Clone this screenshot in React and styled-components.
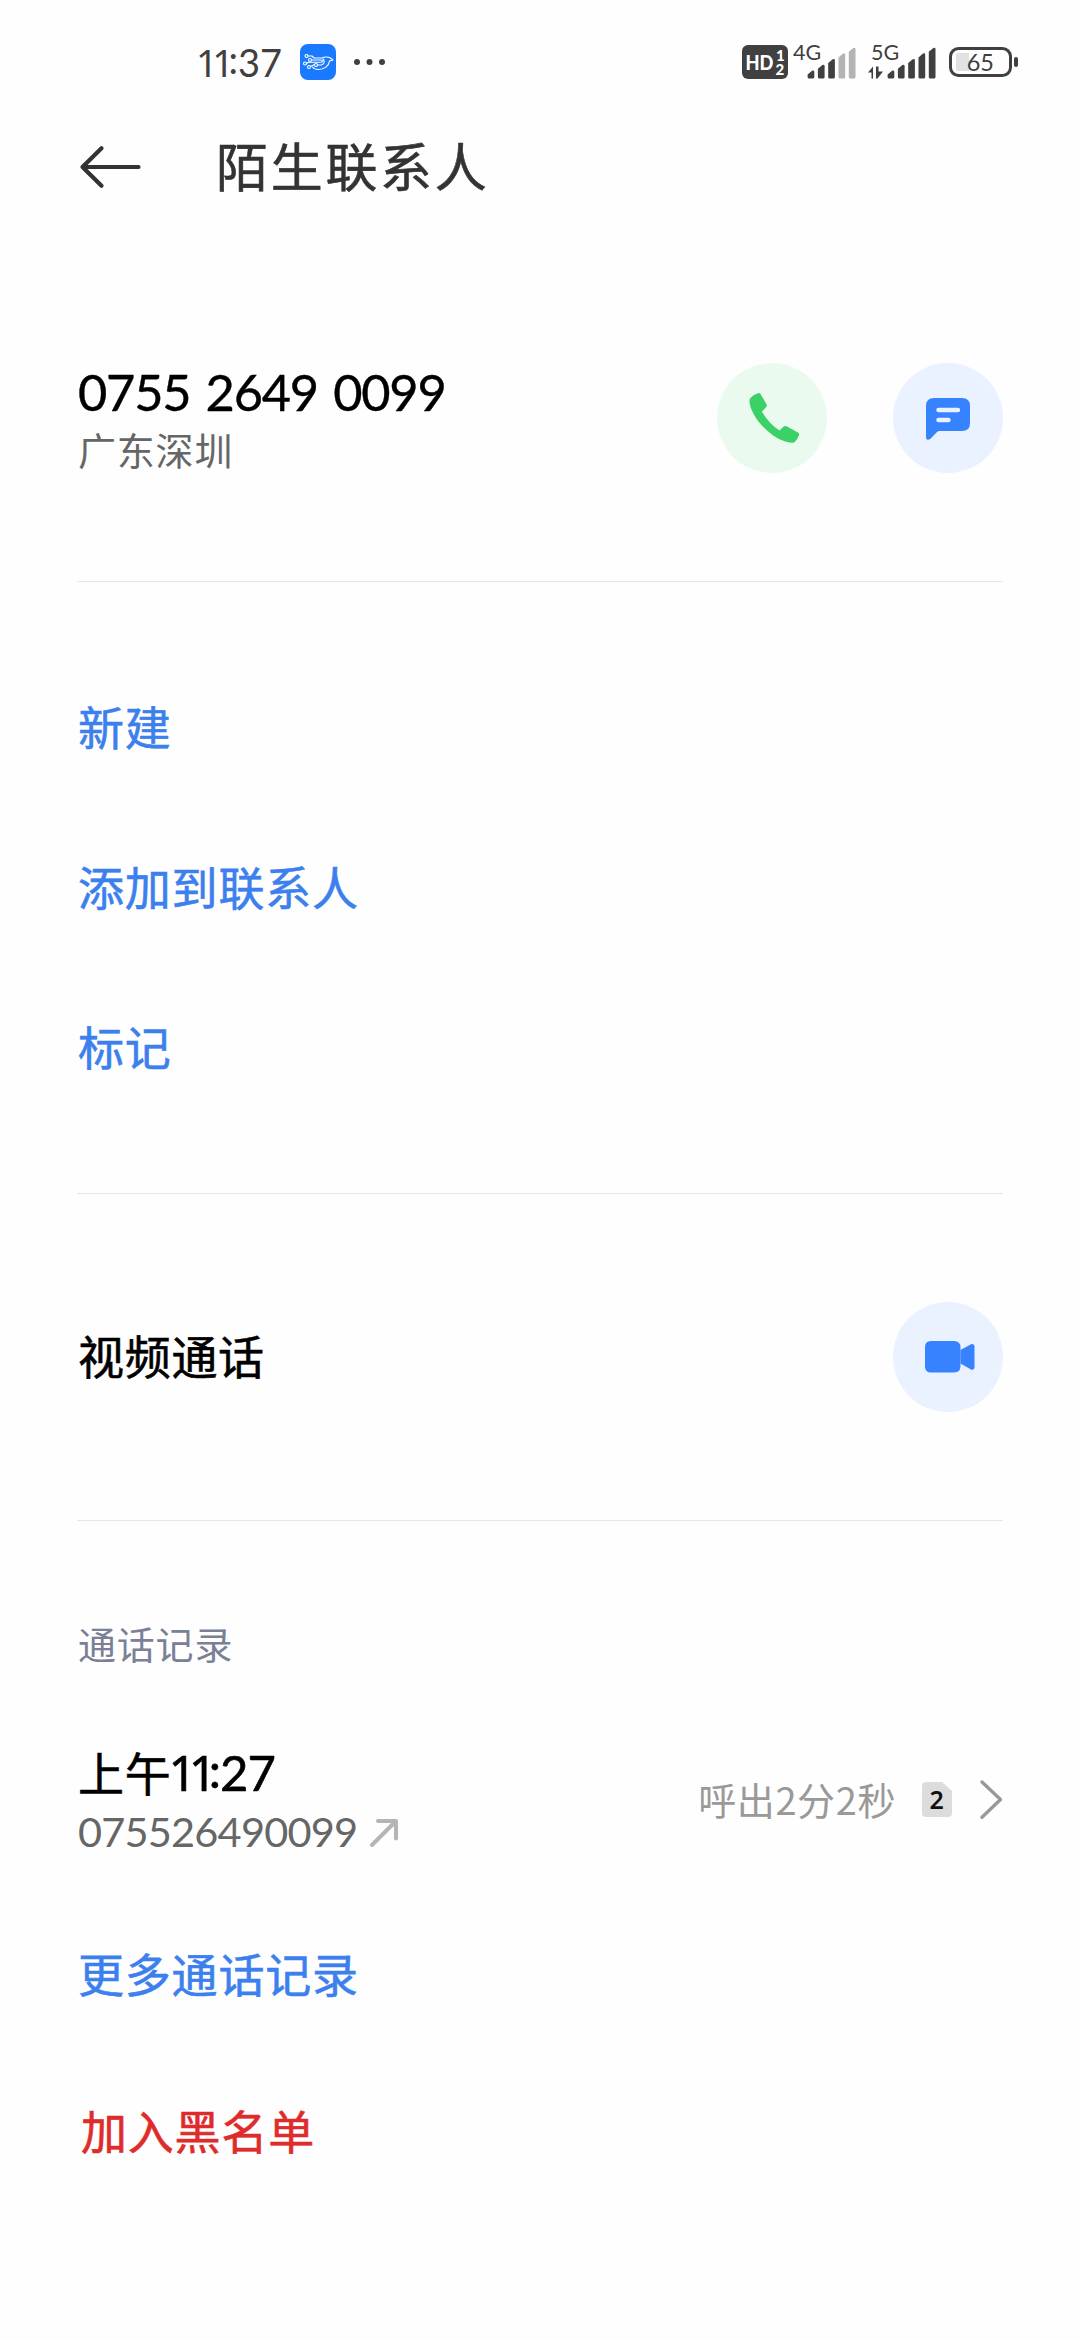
import React from "react";
import styled, { createGlobalStyle } from "styled-components";

const cjk = `"Noto Sans CJK SC", sans-serif`;
const digits = `Lato, "Noto Sans CJK SC", sans-serif`;
const blue = "#3c80ee";
const ink = "#404040";

const GlobalStyle = createGlobalStyle`
  * {
    box-sizing: border-box;
  }
  body {
    margin: 0;
    background: #fefefe;
    font-family: ${cjk};
  }
  button {
    border: 0;
    padding: 0;
    background: none;
    font: inherit;
    text-align: left;
  }
`;
const Page = styled.div`
  width: 1080px;
  height: 2340px;
  overflow: hidden;
  background: #fefefe;
`;
const StatusBar = styled.header`
  display: flex;
  justify-content: space-between;
  align-items: center;
  height: 124px;
  padding: 0 62px 0 196px;
`;
const StatusGroup = styled.div`
  display: flex;
  align-items: center;
  height: 100%;
`;
const Clock = styled.span`
  width: 104px;
  font-family: ${digits};
  font-size: 38px;
  line-height: 60px;
  color: ${ink};
  white-space: nowrap;
`;
/* footless narrow ones used in clock times */
const Ones = styled.span`
  font-family: "Noto Sans", sans-serif;
  line-height: 1;
  letter-spacing: ${props => props.by};
`;
const Colon = styled.span`
  line-height: 1;
  vertical-align: 0.07em;
`;
const Icon = styled.svg`
  display: block;
  flex: none;
  overflow: visible;
  margin-left: ${props => props.gap || 0}px;
  margin-top: ${props => props.drop || 0}px;
`;
const TitleBar = styled.div`
  display: flex;
  align-items: center;
  height: 86px;
  padding-left: 80px;
`;
const Title = styled.h1`
  margin: 0 0 4px 75px;
  font-size: 52px;
  font-weight: 400;
  line-height: 80px;
  letter-spacing: 2.7px;
  color: #333;
  -webkit-text-stroke: 0.6px #333;
`;
const Section = styled.section`
  display: flex;
  flex-direction: ${props => (props.column ? "column" : "row")};
  justify-content: ${props => (props.column ? "center" : "space-between")};
  align-items: ${props => (props.column ? "stretch" : "center")};
  height: ${props => props.size}px;
  margin: 0 77px;
  padding-top: ${props => props.top || 0}px;
  border-bottom: 1px solid #e6e6e6;
`;
const Stack = styled.div`
  display: flex;
  flex-direction: column;
`;
const PhoneNumber = styled.div`
  margin-top: 1px;
  padding-left: 1px;
  font-family: ${digits};
  font-size: 50.5px;
  line-height: 60px;
  letter-spacing: -1.2px;
  word-spacing: 3.5px;
  color: #000;
  -webkit-text-stroke: 0.4px #000;
`;
const Region = styled.div`
  padding-left: 1px;
  font-size: 38px;
  line-height: 54px;
  letter-spacing: 0.8px;
  color: #666;
`;
const Actions = styled.div`
  display: flex;
  gap: 66px;
`;
const RoundButton = styled.button`
  display: flex;
  justify-content: center;
  align-items: center;
  width: 110px;
  height: 110px;
  border-radius: 50%;
  background: ${props => (props.call ? "#eafaef" : "#eaf2ff")};
`;
const LinkRow = styled.button`
  display: block;
  height: ${props => props.size || 160}px;
  padding: 0 0 6px ${props => props.indent || 1}px;
  font-size: 46px;
  letter-spacing: 0.8px;
  color: ${props => props.color || blue};
  -webkit-text-stroke: 0.6px ${props => props.color || blue};
`;
const RowLabel = styled.div`
  padding: 0 0 6px 1px;
  font-size: 46px;
  line-height: 60px;
  letter-spacing: 0.7px;
  color: #000;
  -webkit-text-stroke: 0.6px #000;
`;
const Log = styled.section`
  display: flex;
  flex-direction: column;
  align-items: stretch;
  padding: 93px 77px 0 77px;
`;
const LogHeading = styled.h2`
  margin: 0;
  padding-left: 1px;
  font-size: 38px;
  font-weight: 400;
  line-height: 58px;
  letter-spacing: 0.8px;
  color: #7a8095;
`;
const LogRow = styled.div`
  display: flex;
  justify-content: space-between;
  align-items: center;
  height: 154px;
  margin-top: 50px;
`;
const LogTime = styled.div`
  padding: 3px 0 0 1px;
  font-size: 46px;
  line-height: 60px;
  letter-spacing: 0.8px;
  color: #000;
  -webkit-text-stroke: 0.6px #000;
`;
const TimeDigits = styled.span`
  margin-left: -3px;
  font-family: ${digits};
  font-size: 49px;
  letter-spacing: -0.9px;
`;
const LogNumber = styled.div`
  display: flex;
  align-items: center;
  padding-left: 1px;
  font-family: ${digits};
  font-size: 41.5px;
  line-height: 58px;
  letter-spacing: -0.8px;
  color: #666;
`;
const LogMeta = styled.div`
  display: flex;
  align-items: center;
  font-size: 38px;
  line-height: 58px;
  letter-spacing: 0.6px;
  color: #999;
`;

const Bars = ({ gap, faded, data }) => (
  <Icon gap={gap} width={data ? 67 : 61} height="36" viewBox={`${data ? -6 : 0} 0 ${data ? 67 : 61} 36`}>
    <text x={data ? -3 : -1} y="16.3" fontFamily="Lato" fontSize="21.5" fill={ink}>
      {data ? "5G" : "4G"}
    </text>
    {data && (
      <g fill={ink}>
        <path d="M-6 28.5 -1 22.5V34.5H-2.5V28.5Z" />
        <path d="M2 22.5H4.5V27.5H9L3.5 34.5H2Z" />
      </g>
    )}
    {[0, 1, 2, 3, 4].map(i => (
      <path
        key={i}
        d={`M${13.6 + i * 10.3} ${30.5 - i * 5.7}l4.5 -3.8q2.2 -.8 2.2 1.2V33q0 1.5 -1.5 1.5h-3.7q-1.5 0 -1.5 -1.5Z`}
        fill={i >= 5 - faded ? "#b4b4b4" : ink}
      />
    ))}
  </Icon>
);

const App = () => (
  <Page>
    <GlobalStyle />
    <StatusBar>
      <StatusGroup>
        <Clock>
          <Ones by="-5.5px">11</Ones>
          <Colon>:</Colon>37
        </Clock>
        <Icon width="36" height="36" viewBox="0 0 36 36">
          <rect width="36" height="36" rx="8" fill="#1979ff" />
          <g fill="none" stroke="#fff" strokeWidth="1.1" strokeLinecap="round" strokeLinejoin="round">
            <path d="M8 12h4l2 2h8c2-1 6-1.5 8-.2l3 2.2-3.5 1c-.5 5-5.5 8.5-11 8.5-3 0-5-1-6-2.5" />
            <path d="M11.5 16h9.5c2 0 2 2 0 2.2H8.5L6.5 19.5M17.5 21h4c3-1 3.5-4 1.5-6M10.5 22.5l4-2" />
            <circle cx="6.5" cy="12" r="1.5" />
            <circle cx="10" cy="16" r="1.5" />
            <circle cx="5" cy="19.5" r="1.5" />
            <circle cx="9" cy="23" r="1.5" />
            <circle cx="16" cy="21" r="1.5" />
          </g>
        </Icon>
        <Icon gap="18" width="32" height="8" viewBox="0 0 32 8" fill={ink}>
          <circle cx="3" cy="4" r="3" />
          <circle cx="15.5" cy="4" r="3" />
          <circle cx="28" cy="4" r="3" />
        </Icon>
      </StatusGroup>
      <StatusGroup>
        <Icon width="46" height="34" viewBox="0 0 46 34">
          <rect width="46" height="34" rx="6" fill={ink} />
          <g fill="#fff" fontFamily="Lato" fontWeight="900">
            <text x="3.5" y="24.5" fontSize="20" textLength="28" lengthAdjust="spacingAndGlyphs">HD</text>
            <text x="34" y="15.5" fontSize="15">1</text>
            <text x="33.5" y="30" fontSize="15">2</text>
          </g>
        </Icon>
        <Bars gap={6} faded={2} />
        <Bars gap={13} faded={0} data />
        <Icon gap="14" width="69" height="30" viewBox="0 0 69 30">
          <rect x="1.5" y="1.5" width="60" height="27" rx="8" fill="none" stroke={ink} strokeWidth="3" />
          <path d="M9 6h11v18H9q-2 0-2-2V8q0-2 2-2Z" fill="#e2e2e2" />
          <rect x="65" y="10" width="4" height="10" rx="2" fill={ink} />
          <text x="31.3" y="23.5" textAnchor="middle" fontFamily="Lato" fontSize="23.5" fill={ink}>65</text>
        </Icon>
      </StatusGroup>
    </StatusBar>
    <TitleBar>
      <Icon width="61" height="42" viewBox="0 0 61 42" fill="none" stroke="#333" strokeWidth="4.2" strokeLinecap="round" strokeLinejoin="round">
        <path d="M21.5 2.2 2.5 21l19 18.8M2.5 21h56" />
      </Icon>
      <Title>陌生联系人</Title>
    </TitleBar>
    <Section size={372} top={45}>
      <Stack>
        <PhoneNumber>0755 2649 0099</PhoneNumber>
        <Region>广东深圳</Region>
      </Stack>
      <Actions>
        <RoundButton call>
          <Icon gap="4" width="50" height="50" viewBox="0 0 50 50">
            <path
              d="M1 5.5Q4 1.5 9 .2q1.8-.4 2.7 1.1l5.5 9.5q1.2 2-.2 3.5l-4 4.5Q20 31 30.5 37.5l4-3.7q1.5-1.5 3.5-.4l11 6q1.5 1 1 2.8-2 5-5 7.3C36 51 22 43 12.5 32 2 20 -.8 9 1 5.5Z"
              fill="#3ad167"
            />
          </Icon>
        </RoundButton>
        <RoundButton>
          <Icon drop="2" width="44" height="42" viewBox="0 0 44 42">
            <path d="M8 0H36q8 0 8 8V25q0 8-8 8H13.5q-1.5 0-2.5 1L4.5 40.8Q0 43.5 0 38.5V8Q0 0 8 0Z" fill="#3682ff" />
            <path d="M12.5 12h19.5M12.5 22h10" stroke="#eaf2ff" strokeWidth="4.4" strokeLinecap="round" />
          </Icon>
        </RoundButton>
      </Actions>
    </Section>
    <Section column size={612}>
      <LinkRow>新建</LinkRow>
      <LinkRow>添加到联系人</LinkRow>
      <LinkRow>标记</LinkRow>
    </Section>
    <Section size={327}>
      <RowLabel>视频通话</RowLabel>
      <RoundButton>
        <Icon gap="4" width="50" height="32" viewBox="0 0 50 32" fill="#3682ff">
          <path d="M6 0H29q6.5 0 6.5 6.5V25q0 6.5-6.5 6.5H6Q0 31.5 0 25.5V6Q0 0 6 0Z" />
          <path d="M35.5 9 46 3.2q3-1 3.5 2V26.5q-.5 3-3.5 2L35.5 22.5Z" />
        </Icon>
      </RoundButton>
    </Section>
    <Log>
      <LogHeading>通话记录</LogHeading>
      <LogRow>
        <Stack>
          <LogTime>
            上午
            <TimeDigits>
              <Ones by="-8px">11</Ones>
              <Colon>:</Colon>27
            </TimeDigits>
          </LogTime>
          <LogNumber>
            075526490099
            <Icon gap="13" drop="3" width="28" height="28" viewBox="0 0 28 28" fill="none" stroke="#b5b5b5" strokeWidth="4" strokeLinecap="round" strokeLinejoin="round">
              <path d="M2 26 25 3M8 2h18v17.5" />
            </Icon>
          </LogNumber>
        </Stack>
        <LogMeta>
          呼出2分2秒
          <Icon gap="26" width="30" height="35" viewBox="0 0 30 35">
            <path d="M4 0H20L30 9V31q0 4-4 4H4q-4 0-4-4V4Q0 0 4 0Z" fill="#dcdcdc" />
            <text x="15" y="26.5" textAnchor="middle" fontFamily="Noto Sans" fontWeight="600" fontSize="25" fill="#111">2</text>
          </Icon>
          <Icon gap="28" width="23" height="39" viewBox="0 0 23 39" fill="none" stroke="#999" strokeWidth="3.4" strokeLinecap="round" strokeLinejoin="round">
            <path d="M2 2 20.5 19.5 2 37.2" />
          </Icon>
        </LogMeta>
      </LogRow>
      <LinkRow size={198}>更多通话记录</LinkRow>
      <LinkRow size={116} indent={4} color="#e02b2b">加入黑名单</LinkRow>
    </Log>
  </Page>
);

export default App;
